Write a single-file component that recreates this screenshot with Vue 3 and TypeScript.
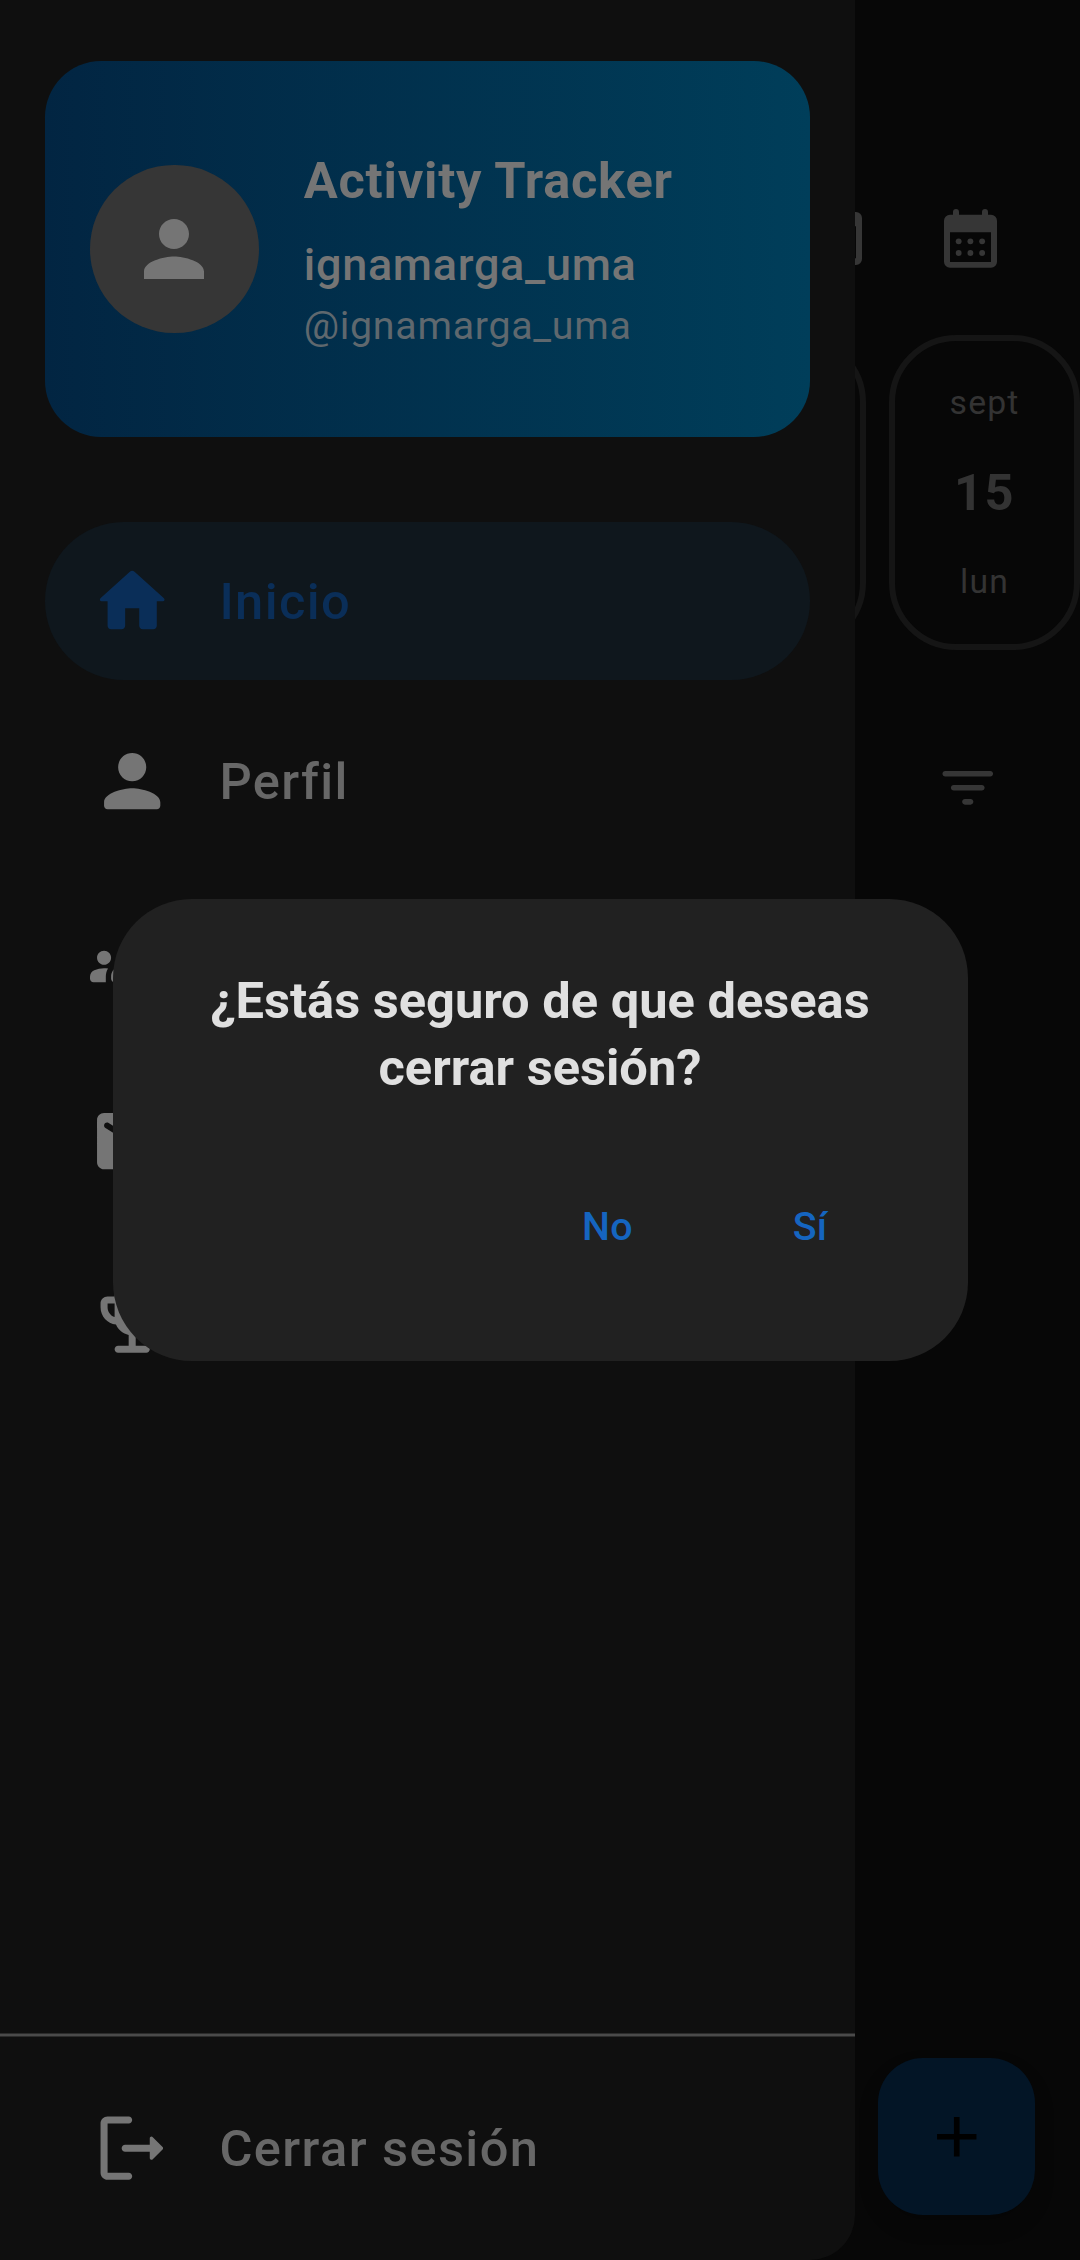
<script setup lang="ts">
interface MenuItem {
  id: string
  label: string
  active: boolean
  path: string
}

const menu: MenuItem[] = [
  {
    id: 'home',
    label: 'Inicio',
    active: true,
    path: 'M10 19v-5h4v5c0 .55.45 1 1 1h3c.55 0 1-.45 1-1v-7h1.7c.46 0 .68-.57.33-.87L12.67 3.6c-.38-.34-.96-.34-1.34 0l-8.36 7.53c-.34.3-.13.87.33.87H5v7c0 .55.45 1 1 1h3c.55 0 1-.45 1-1z',
  },
  {
    id: 'profile',
    label: 'Perfil',
    active: false,
    path: 'M12 12c2.21 0 4-1.79 4-4s-1.79-4-4-4-4 1.79-4 4 1.79 4 4 4zm0 2c-2.67 0-8 1.34-8 4v1c0 .55.45 1 1 1h14c.55 0 1-.45 1-1v-1c0-2.66-5.33-4-8-4z',
  },
  {
    id: 'groups',
    label: '',
    active: false,
    path: 'M12 12.75c1.63 0 3.07.39 4.24.9 1.08.48 1.76 1.56 1.76 2.73V17c0 .55-.45 1-1 1H7c-.55 0-1-.45-1-1v-.61c0-1.18.68-2.26 1.76-2.73 1.17-.52 2.61-.91 4.24-.91zM4 13c1.1 0 2-.9 2-2s-.9-2-2-2-2 .9-2 2 .9 2 2 2zm1.13 1.1c-.37-.06-.74-.1-1.13-.1-.99 0-1.93.21-2.78.58C.48 14.9 0 15.62 0 16.43V17c0 .55.45 1 1 1h3.5v-1.61c0-.83.23-1.61.63-2.29z',
  },
  {
    id: 'mail',
    label: '',
    active: false,
    path: 'M20 4H4c-1.1 0-2 .9-2 2v12c0 1.1.9 2 2 2h16c1.1 0 2-.9 2-2V6c0-1.1-.9-2-2-2zm-.4 4.25l-7.07 4.42c-.32.2-.74.2-1.06 0L4.4 8.25c-.25-.16-.4-.43-.4-.72 0-.67.73-1.07 1.3-.72L12 11l6.7-4.19c.57-.35 1.3.05 1.3.72 0 .29-.15.56-.4.72z',
  },
  {
    id: 'trophy',
    label: '',
    active: false,
    path: 'M19 5h-2V4c0-.55-.45-1-1-1H8c-.55 0-1 .45-1 1v1H5c-1.1 0-2 .9-2 2v1c0 2.55 1.92 4.63 4.39 4.94.63 1.5 1.98 2.63 3.61 2.96V19H8c-.55 0-1 .45-1 1s.45 1 1 1h8c.55 0 1-.45 1-1s-.45-1-1-1h-3v-3.1c1.63-.33 2.98-1.46 3.61-2.96C19.08 12.63 21 10.55 21 8V7c0-1.1-.9-2-2-2zM5 8V7h2v3.82C5.84 10.4 5 9.3 5 8zm14 0c0 1.3-.84 2.4-2 2.82V7h2v1z',
  },
]
</script>

<template>
  <div class="screen">
    <main class="page">
      <header class="topbar">
        <svg class="today" viewBox="0 0 54 53">
          <path fill-rule="evenodd" d="M6 0H48a6 6 0 0 1 6 6V47a6 6 0 0 1-6 6H6a6 6 0 0 1-6-6V6a6 6 0 0 1 6-6zM6 14.3V46.3H48V14.3z" />
        </svg>
        <svg class="calendar" viewBox="492 88 159 176">
          <path
            fill-rule="evenodd"
            d="M519 105V97a9 9 0 0 1 18 0v8h69V97a9 9 0 0 1 18 0v8h9a18 18 0 0 1 18 18V246a18 18 0 0 1-18 18H510a18 18 0 0 1-18-18V123a18 18 0 0 1 18-18zM510 158V247H633V158z"
          />
          <circle v-for="n in 6" :key="n" :cx="536 + ((n - 1) % 3) * 35.2" :cy="n > 3 ? 220 : 185" r="8.8" />
        </svg>
      </header>
      <div class="dates">
        <div class="date"></div>
        <div class="date">
          <span class="small">sept</span>
          <span class="day">15</span>
          <span class="small">lun</span>
        </div>
      </div>
      <div class="filters">
        <svg class="filter" viewBox="0 0 24 24">
          <path d="M11 18h2c.55 0 1-.45 1-1s-.45-1-1-1h-2c-.55 0-1 .45-1 1s.45 1 1 1zM3 7c0 .55.45 1 1 1h16c.55 0 1-.45 1-1s-.45-1-1-1H4c-.55 0-1 .45-1 1zm4 6h10c.55 0 1-.45 1-1s-.45-1-1-1H7c-.55 0-1 .45-1 1s.45 1 1 1z" />
        </svg>
      </div>
      <button class="fab" aria-label="Añadir">
        <svg viewBox="0 0 24 24"><path d="M19 13h-6v6h-2v-6H5v-2h6V5h2v6h6v2z" /></svg>
      </button>
    </main>

    <aside class="drawer">
      <section class="card">
        <div class="avatar">
          <svg viewBox="0 0 24 24">
            <path d="M12 12c2.21 0 4-1.79 4-4s-1.79-4-4-4-4 1.79-4 4 1.79 4 4 4zm0 2c-2.67 0-8 1.34-8 4v2h16v-2c0-2.66-5.33-4-8-4z" />
          </svg>
        </div>
        <div class="who">
          <span class="app">Activity Tracker</span>
          <span class="name">ignamarga_uma</span>
          <span class="handle">@ignamarga_uma</span>
        </div>
      </section>
      <nav class="menu">
        <div v-for="item in menu" :key="item.id" class="item" :class="{ active: item.active }">
          <svg viewBox="0 0 24 24"><path :d="item.path" /></svg>
          <span>{{ item.label }}</span>
        </div>
      </nav>
      <div class="divider"></div>
      <div class="foot">
        <div class="item">
          <svg viewBox="0 0 24 24">
            <path d="M5 5h6c.55 0 1-.45 1-1s-.45-1-1-1H5c-1.1 0-2 .9-2 2v14c0 1.1.9 2 2 2h6c.55 0 1-.45 1-1s-.45-1-1-1H5V5zM20.65 11.65l-2.79-2.79c-.32-.32-.86-.1-.86.35V11h-7c-.55 0-1 .45-1 1s.45 1 1 1h7v1.79c0 .45.54.67.85.35l2.79-2.79c.2-.19.2-.51.01-.7z" />
          </svg>
          <span>Cerrar sesión</span>
        </div>
      </div>
    </aside>

    <div class="overlay">
      <div class="dialog" role="dialog">
        <h2>¿Estás seguro de que deseas cerrar sesión?</h2>
        <div class="actions">
          <button>No</button>
          <button>Sí</button>
        </div>
      </div>
    </div>
  </div>
</template>

<style>
body {
  background: #070707;
}
</style>

<style scoped>
.screen {
  position: relative;
  width: 1080px;
  height: 2260px;
  overflow: hidden;
  background: #070707;
  font-family: Roboto, sans-serif;
}
svg {
  display: block;
  flex: none;
  fill: currentColor;
}
button {
  border: 0;
  padding: 0;
  background: none;
  font-family: inherit;
}
.page {
  display: flex;
  flex-direction: column;
  height: 100%;
  color: #363636;
}
.topbar {
  display: flex;
  justify-content: flex-end;
  align-items: flex-start;
  gap: 82px;
  box-sizing: border-box;
  height: 335px;
  padding: 209.3px 83px 0 0;
}
.today {
  width: 54px;
  height: 53px;
  margin-top: 3px;
}
.calendar {
  width: 53px;
  height: 58.7px;
}
.dates {
  display: flex;
  justify-content: flex-end;
  gap: 23px;
  height: 315px;
}
.date {
  display: flex;
  flex-direction: column;
  align-items: center;
  flex: none;
  box-sizing: border-box;
  width: 191px;
  border: 6px solid #151515;
  border-radius: 67.5px;
  padding-top: 37.5px;
}
.small {
  font-size: 33.75px;
  line-height: 48px;
  letter-spacing: 1.125px;
  color: #333;
}
.day {
  margin: 28px 0 27px;
  font-size: 50.625px;
  font-weight: 700;
  line-height: 76px;
  letter-spacing: 1.4px;
  color: #333;
}
.filters {
  display: flex;
  justify-content: flex-end;
  padding: 103.5px 78.75px 0 0;
}
.filter {
  width: 67.5px;
  height: 67.5px;
}
.fab {
  display: flex;
  align-items: center;
  justify-content: center;
  align-self: flex-end;
  width: 157.5px;
  height: 157.5px;
  margin: auto 45px 45px 0;
  border-radius: 45px;
  background: #031526;
  color: #000;
  box-shadow: 0 11px 20px rgba(0, 0, 0, 0.2);
}
.fab svg {
  width: 67.5px;
  height: 67.5px;
}
.drawer {
  position: absolute;
  top: 0;
  left: 0;
  display: flex;
  flex-direction: column;
  box-sizing: border-box;
  width: 855px;
  height: 2260px;
  padding-top: 61px;
  border-radius: 0 0 45px 0;
  background: #0f0f0f;
  color: #757575;
}
.card {
  display: flex;
  align-items: center;
  gap: 45px;
  box-sizing: border-box;
  height: 376px;
  margin: 0 45px;
  padding: 0 45px;
  border-radius: 56.25px;
  background: linear-gradient(90deg, #022542, #003e5a);
}
.avatar {
  display: flex;
  align-items: center;
  justify-content: center;
  width: 168.75px;
  height: 168.75px;
  border-radius: 50%;
  background: #363636;
}
.avatar svg {
  width: 90px;
  height: 90px;
}
.who {
  display: flex;
  flex-direction: column;
  margin-top: -1px;
}
.app {
  font-size: 50.625px;
  font-weight: 700;
  line-height: 76px;
  letter-spacing: 0.75px;
  margin-bottom: 12px;
}
.name {
  font-size: 45px;
  font-weight: 500;
  line-height: 67px;
  letter-spacing: 0.7px;
}
.handle {
  font-size: 39.375px;
  line-height: 56px;
  letter-spacing: 0.7px;
  color: #5f686e;
}
.menu {
  display: flex;
  flex-direction: column;
  gap: 22.5px;
  margin: 85px 45px 0;
}
.item {
  display: flex;
  align-items: center;
  gap: 45px;
  box-sizing: border-box;
  height: 157.5px;
  padding: 0 45px;
  border-radius: 78.75px;
}
.item svg {
  width: 84.375px;
  height: 84.375px;
}
.item span {
  padding-top: 2px;
  font-size: 50.625px;
  font-weight: 500;
  line-height: 76px;
  letter-spacing: 1.4px;
  color: #676767;
}
.item.active {
  background: #0f171d;
}
.item.active,
.item.active span {
  color: #0a2e58;
}
.divider {
  flex: none;
  height: 4px;
  margin-top: auto;
  background: linear-gradient(#2b2b2b 1px, #4a4a4a 1px 3px, #2b2b2b 3px);
}
.foot {
  padding: 32px 45px 33.5px;
}
.overlay {
  position: absolute;
  inset: 0;
  display: flex;
  align-items: center;
  justify-content: center;
}
.dialog {
  box-sizing: border-box;
  width: 855px;
  height: 461.5px;
  padding: 67.5px;
  border-radius: 78.75px;
  background: #212121;
}
.dialog h2 {
  margin: 0;
  font-size: 50.625px;
  font-weight: 700;
  line-height: 67px;
  text-align: center;
  color: #e0e0e0;
}
.actions {
  display: flex;
  justify-content: flex-end;
  gap: 22.5px;
  margin-top: 58.5px;
}
.actions button {
  width: 180px;
  height: 135px;
  font-size: 39.375px;
  font-weight: 500;
  line-height: 56px;
  letter-spacing: 0.3px;
  color: #1565c0;
}
</style>
